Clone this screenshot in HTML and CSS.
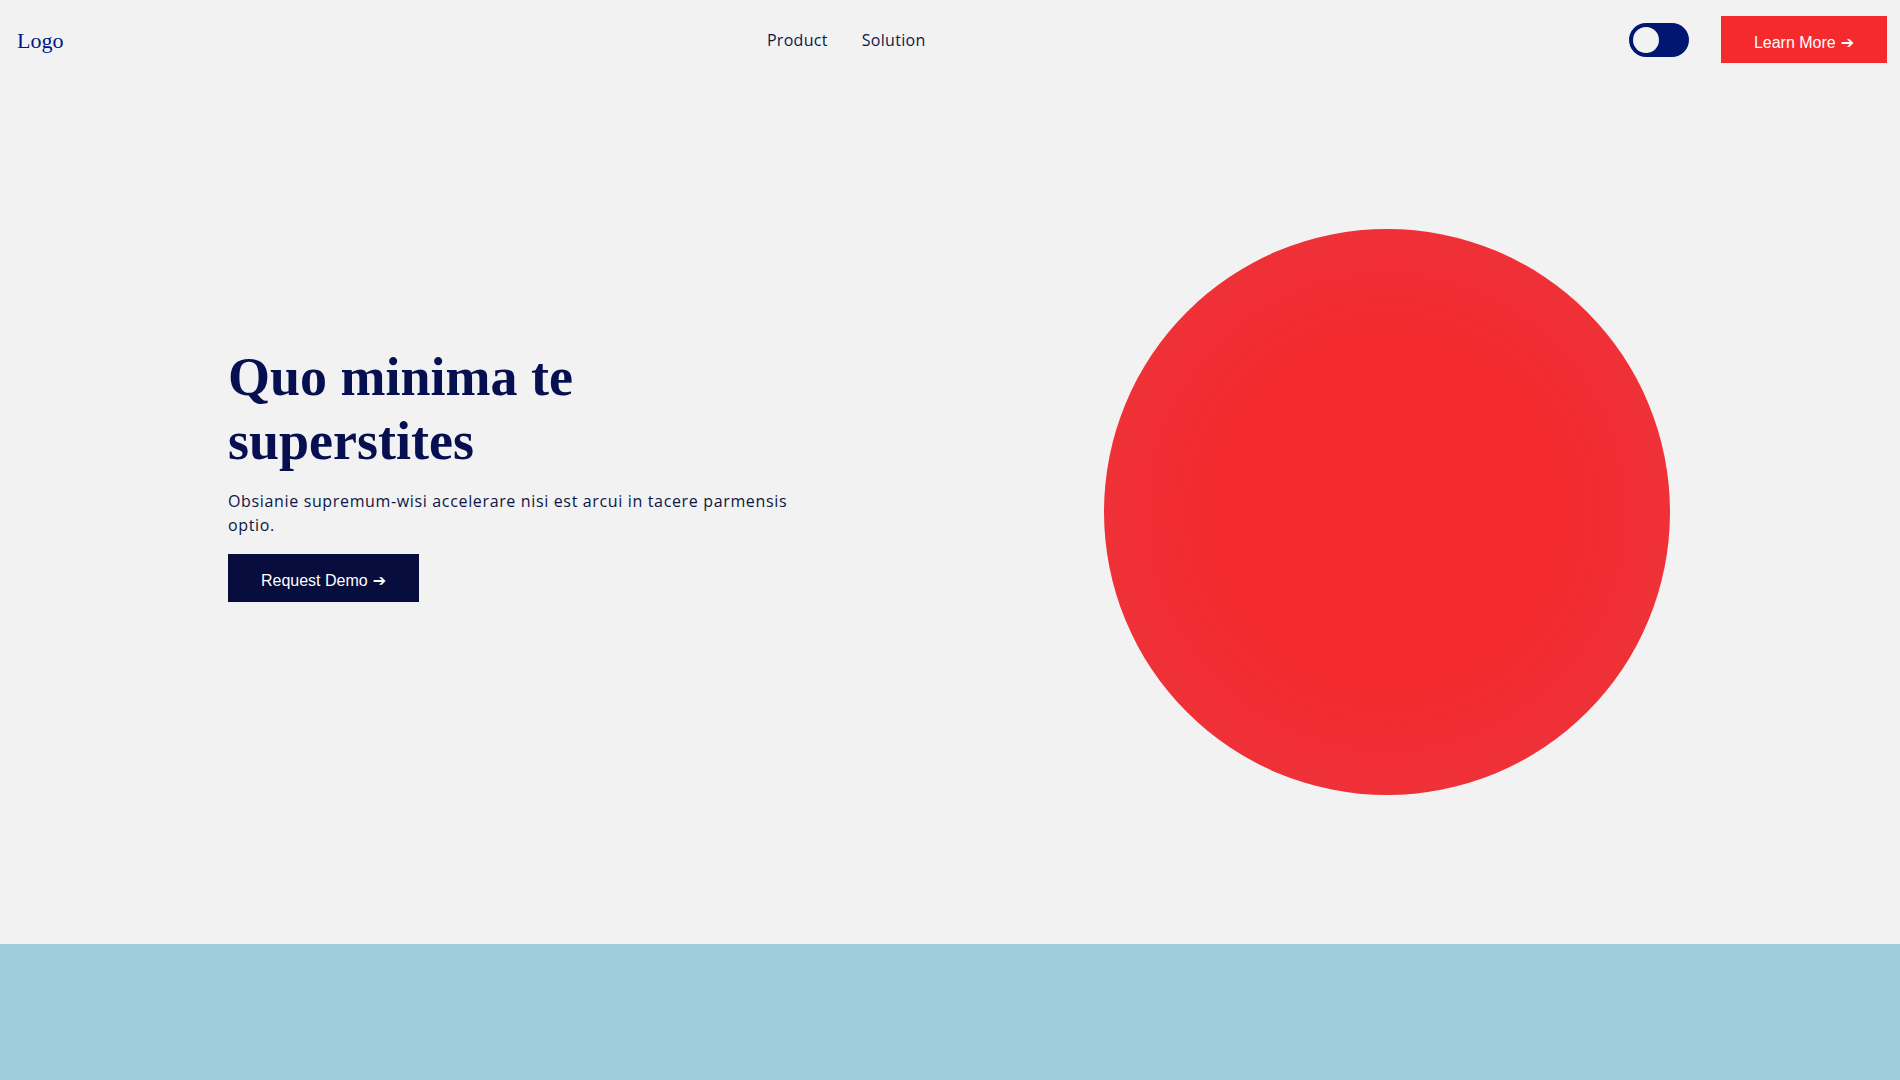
FILE: index.html
```html
<!DOCTYPE html>
<html lang="en">
<head>
<meta charset="utf-8">
<title>Landing</title>
<link rel="stylesheet" href="styles.css">
</head>
<body>
<header class="header">
  <a class="logo" href="#">Logo</a>
  <nav class="nav">
    <a class="nav-link" href="#">Product</a>
    <a class="nav-link" href="#">Solution</a>
  </nav>
  <div class="header-actions">
    <span class="toggle"><span class="toggle-knob"></span></span>
    <a class="btn btn-red" href="#">Learn More <span class="arrow">➔</span></a>
  </div>
</header>
<main>
  <section class="hero">
    <div class="hero-text">
      <h1 class="hero-title">Quo minima te superstites</h1>
      <p class="hero-desc">Obsianie supremum-wisi accelerare nisi est arcui in tacere parmensis optio.</p>
      <a class="btn btn-navy" href="#">Request Demo <span class="arrow">➔</span></a>
    </div>
    <div class="hero-circle"></div>
  </section>
  <section class="band"></section>
</main>
</body>
</html>
```

FILE: styles.css
```css
* { box-sizing: border-box; }
html, body { margin: 0; padding: 0; }
body {
  background: #f2f2f2;
  font-family: "Open Sans", "Liberation Sans", sans-serif;
  overflow: hidden;
}
a { text-decoration: none; }

.header {
  height: 79px;
  display: flex;
  align-items: center;
  justify-content: space-between;
  padding: 0 13px 0 17px;
}
.logo {
  font-family: "Liberation Serif", serif;
  font-size: 22px;
  color: #00188a;
  line-height: 1;
  padding-top: 2px;
}
.nav {
  display: flex;
  gap: 34px;
}
.nav-link {
  font-size: 16px;
  color: #0f1848;
  letter-spacing: 0.3px;
}
.header-actions {
  display: flex;
  align-items: center;
  gap: 32px;
}
.toggle {
  width: 60px;
  height: 34px;
  border-radius: 17px;
  background: #001670;
  display: flex;
  align-items: center;
  padding: 0 4px;
}
.toggle-knob {
  width: 26px;
  height: 26px;
  border-radius: 50%;
  background: #f2f2f2;
}
.btn {
  display: inline-flex;
  align-items: center;
  justify-content: center;
  font-family: "Liberation Sans", Arial, sans-serif;
  font-size: 16px;
  color: #ffffff;
  height: 47px;
  padding: 7px 0 0;
  white-space: nowrap;
}
.btn .arrow {
  font-family: "DejaVu Sans", sans-serif;
  font-size: 16px;
  margin-left: 5px;
  line-height: 1;
}
.btn-red {
  background: #f42a2d;
  width: 166px;
}
.btn-navy {
  background: #070d3c;
  width: 191px;
  height: 48px;
  padding-top: 6px;
}

.hero {
  height: 865px;
  display: flex;
  align-items: center;
  justify-content: space-between;
  padding: 0 230px 0 228px;
}
.hero-text {
  margin-bottom: 77px;
  width: 600px;
}
.hero-title {
  font-family: "Liberation Serif", serif;
  font-weight: bold;
  font-size: 54px;
  line-height: 64px;
  color: #061050;
  margin: 0;
  width: 400px;
}
.hero-desc {
  font-size: 16px;
  line-height: 24px;
  color: #0d1642;
  margin: 16px 0 17px;
  max-width: 585px;
  letter-spacing: 0.65px;
}
.hero-circle {
  width: 566px;
  height: 566px;
  border-radius: 50%;
  background: radial-gradient(circle at 50% 50%, #f32a2c 0%, #f22a2e 45%, #ec3843 100%);
  flex-shrink: 0;
}
.band {
  height: 136px;
  background: #9fcdda;
}
```
